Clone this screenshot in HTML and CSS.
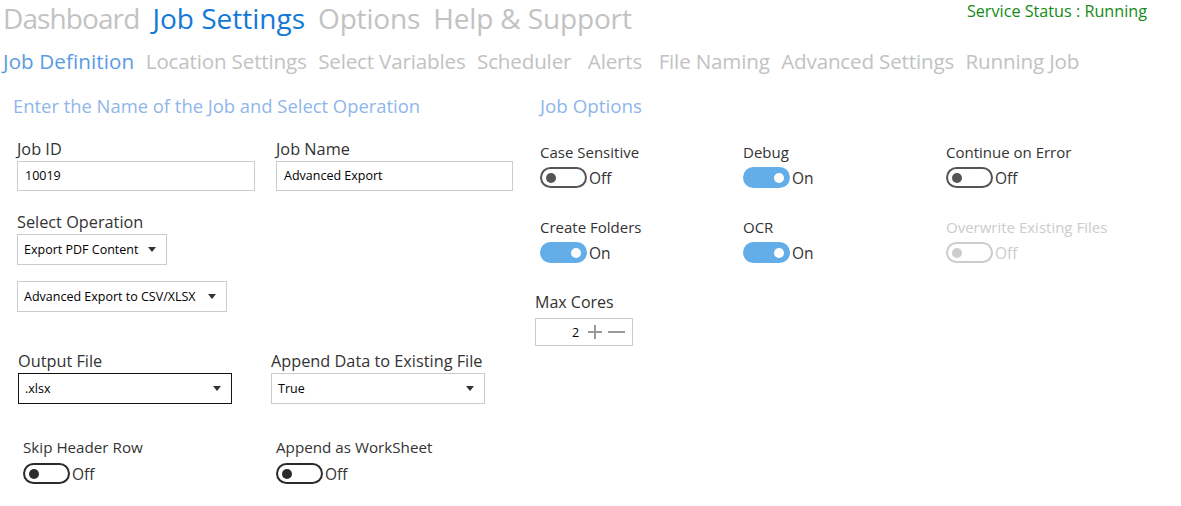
FILE: index.html
```html
<!DOCTYPE html>
<html>
<head>
<meta charset="utf-8">
<link rel="stylesheet" href="styles.css">
</head>
<body>
<header class="topbar">
  <nav class="mainnav">
    <span class="mainnav-item tight">Dashboard</span>
    <span class="mainnav-item active">Job Settings</span>
    <span class="mainnav-item">Options</span>
    <span class="mainnav-item">Help &amp; Support</span>
  </nav>
  <div class="status">Service Status : Running</div>
</header>
<nav class="subnav">
  <span class="subnav-item active">Job Definition</span>
  <span class="subnav-item">Location Settings</span>
  <span class="subnav-item">Select Variables</span>
  <span class="subnav-item">Scheduler</span>
  <span class="subnav-item wide">Alerts</span>
  <span class="subnav-item">File Naming</span>
  <span class="subnav-item">Advanced Settings</span>
  <span class="subnav-item">Running Job</span>
</nav>
<main class="content">
  <section class="left">
    <h2 class="section-title">Enter the Name of the Job and Select Operation</h2>
    <div class="row row-job">
      <div class="field field-id">
        <label class="lbl">Job ID</label>
        <div class="input w-id">10019</div>
      </div>
      <div class="field field-name">
        <label class="lbl">Job Name</label>
        <div class="input w-name">Advanced Export</div>
      </div>
    </div>
    <div class="field field-op">
      <label class="lbl">Select Operation</label>
      <div class="select w-op"><span>Export PDF Content</span><i class="arrow"></i></div>
    </div>
    <div class="select w-adv"><span>Advanced Export to CSV/XLSX</span><i class="arrow"></i></div>
    <div class="row row-out">
      <div class="field field-out">
        <label class="lbl">Output File</label>
        <div class="select focused w-out"><span>.xlsx</span><i class="arrow"></i></div>
      </div>
      <div class="field field-append">
        <label class="lbl">Append Data to Existing File</label>
        <div class="select w-out"><span>True</span><i class="arrow"></i></div>
      </div>
    </div>
    <div class="row row-skip">
      <div class="field field-skip">
        <label class="lbl sm">Skip Header Row</label>
        <div class="toggle-line"><span class="toggle dark"></span><span class="tstate">Off</span></div>
      </div>
      <div class="field field-ws">
        <label class="lbl sm">Append as WorkSheet</label>
        <div class="toggle-line"><span class="toggle dark"></span><span class="tstate">Off</span></div>
      </div>
    </div>
  </section>
  <section class="right">
    <h2 class="section-title">Job Options</h2>
    <div class="opts">
      <div class="opt">
        <div class="olbl">Case Sensitive</div>
        <div class="toggle-line"><span class="toggle off"></span><span class="tstate">Off</span></div>
      </div>
      <div class="opt">
        <div class="olbl">Debug</div>
        <div class="toggle-line"><span class="toggle on"></span><span class="tstate">On</span></div>
      </div>
      <div class="opt">
        <div class="olbl">Continue on Error</div>
        <div class="toggle-line"><span class="toggle off"></span><span class="tstate">Off</span></div>
      </div>
      <div class="opt">
        <div class="olbl">Create Folders</div>
        <div class="toggle-line"><span class="toggle on"></span><span class="tstate">On</span></div>
      </div>
      <div class="opt">
        <div class="olbl">OCR</div>
        <div class="toggle-line"><span class="toggle on"></span><span class="tstate">On</span></div>
      </div>
      <div class="opt disabled">
        <div class="olbl">Overwrite Existing Files</div>
        <div class="toggle-line"><span class="toggle dis"></span><span class="tstate">Off</span></div>
      </div>
    </div>
    <div class="cores">
      <div class="olbl">Max Cores</div>
      <div class="spin">
        <span class="spin-val">2</span>
        <svg class="spin-btn" width="16" height="16" viewBox="0 0 16 16"><path d="M8 1V15M1 8H15" stroke="#9a9a9a" stroke-width="2"/></svg>
        <svg class="spin-btn" width="17" height="16" viewBox="0 0 17 16"><path d="M0 8H17" stroke="#9a9a9a" stroke-width="2"/></svg>
      </div>
    </div>
  </section>
</main>
</body>
</html>
```
FILE: styles.css
```css
* { box-sizing: border-box; }
body {
  margin: 0;
  background: #ffffff;
  font-family: "Open Sans", "Noto Sans", sans-serif;
  color: #333333;
  width: 1181px;
  height: 506px;
  overflow: hidden;
}
.topbar {
  display: flex;
  justify-content: space-between;
  height: 38px;
}
.mainnav {
  display: flex;
  gap: 13px;
  padding-left: 3px;
}
.mainnav-item {
  font-size: 28px;
  line-height: 36px;
  color: #c2c2c2;
  letter-spacing: -0.15px;
}
.mainnav-item.tight { letter-spacing: -0.9px; }
.mainnav-item.active { color: #1479d6; letter-spacing: 0; }
.status {
  font-size: 16.2px;
  line-height: 22px;
  color: #138a13;
  padding-right: 34px;
}
.subnav {
  display: flex;
  gap: 11.5px;
  padding-left: 3px;
  height: 46px;
  align-items: center;
}
.subnav-item {
  font-size: 20.6px;
  line-height: 28px;
  color: #c2c2c2;
  letter-spacing: -0.17px;
}
.subnav-item.active { color: #5a9ae2; letter-spacing: 0.1px; }
.subnav-item.wide { margin: 0 5px; }

.content {
  display: flex;
  padding-top: 9px;
}
.left {
  width: 540px;
  padding-left: 13px;
}
.right { flex: 1; }
.section-title {
  margin: 0;
  font-weight: normal;
  font-size: 18.4px;
  line-height: 26px;
  color: #8fb6ea;
}
.right .section-title { font-size: 18.8px; }
.row { display: flex; }
.field { display: flex; flex-direction: column; }
.lbl {
  font-size: 16.3px;
  line-height: 20px;
  color: #333333;
  margin-bottom: 2px;
}
.lbl.sm { font-size: 15.2px; }
.row-job { margin-top: 20px; }
.field-id { padding-left: 4px; width: 263px; }
.input {
  height: 30px;
  border: 1px solid #cccccc;
  font-size: 12.5px;
  line-height: 28px;
  padding-left: 7px;
  color: #000;
}
.w-id { width: 238px; }
.w-name { width: 237px; }
.field-op { margin-top: 21px; padding-left: 4px; }
.select {
  display: flex;
  align-items: center;
  justify-content: space-between;
  height: 31px;
  border: 1px solid #cccccc;
  font-size: 12.5px;
  color: #000;
  padding: 0 10px 0 6px;
}
.select .arrow {
  width: 0; height: 0;
  border-left: 4px solid transparent;
  border-right: 4px solid transparent;
  border-top: 5px solid #333;
}
.w-op { width: 150px; }
.w-adv { width: 210px; margin-top: 16px; margin-left: 4px; }
.w-out { width: 214px; }
.select.focused { border: 1.5px solid #111; }
.row-out { margin-top: 39px; }
.field-out { padding-left: 5px; width: 258px; }
.row-skip { margin-top: 33px; }
.field-skip { padding-left: 10px; width: 263px; }
.row-skip .lbl { margin-bottom: 6px; }

.toggle-line { display: flex; align-items: center; }
.toggle {
  position: relative;
  display: inline-block;
  width: 47px;
  height: 21px;
  border-radius: 11px;
  border: 2px solid #555;
}
.toggle::after {
  content: "";
  position: absolute;
  top: 3.5px;
  left: 4px;
  width: 10px;
  height: 10px;
  border-radius: 50%;
  background: #555;
}
.toggle.dark { border-color: #2b2b2b; }
.toggle.dark::after { background: #2b2b2b; }
.toggle.on { background: #63ade8; border-color: #63ade8; }
.toggle.on::after { left: auto; right: 4px; background: #fff; }
.toggle.dis { border-color: #cccccc; }
.toggle.dis::after { background: #cccccc; }
.tstate {
  font-size: 15.5px;
  line-height: 20px;
  margin-left: 2px;
  color: #333;
}
.opts {
  display: grid;
  grid-template-columns: 203px 203px 203px;
  row-gap: 29px;
  margin-top: 23px;
}
.olbl {
  font-size: 15px;
  line-height: 20px;
  color: #333;
  margin-bottom: 5px;
}
.opt.disabled .olbl, .opt.disabled .tstate { color: #cccccc; }
.cores { margin-top: 29px; margin-left: -5px; }
.cores .olbl { font-size: 16px; margin-bottom: 6px; }
.spin {
  display: flex;
  align-items: center;
  width: 98px;
  height: 28px;
  border: 1px solid #cccccc;
  padding-left: 36px;
}
.spin-val { font-size: 12.5px; color: #000; width: 14px; margin-right: 1px; }
.spin-btn { margin-right: 5px; }
```
